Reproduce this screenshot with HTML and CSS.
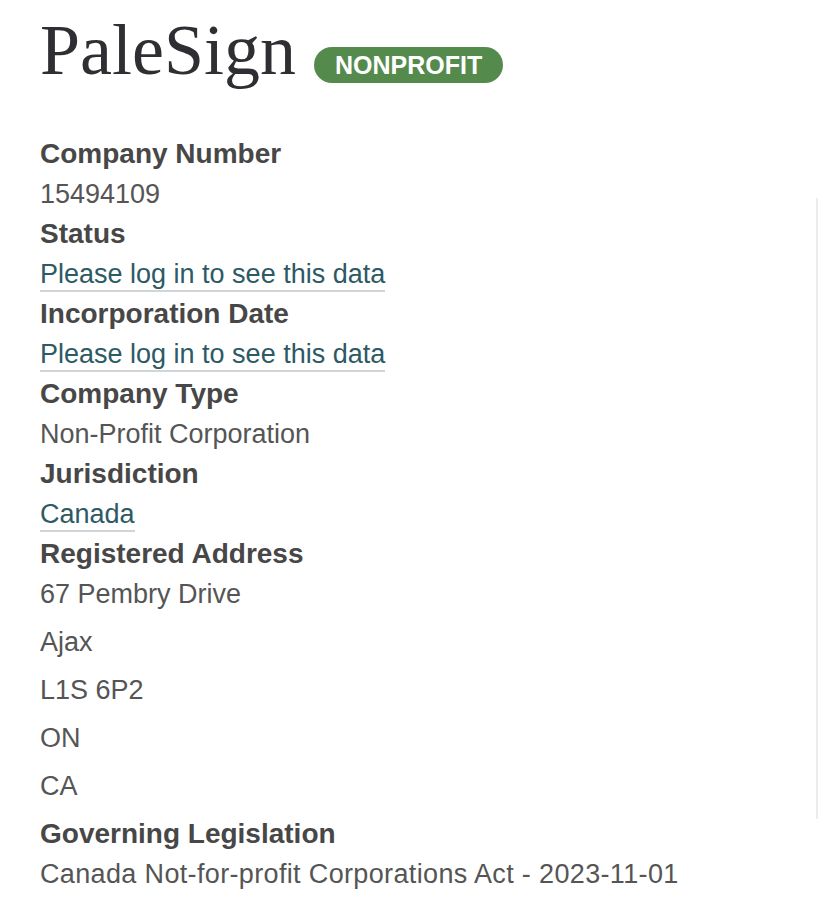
FILE: index.html
```html
<!DOCTYPE html>
<html lang="en">
<head>
<meta charset="utf-8">
<title>PaleSign</title>
<link rel="stylesheet" href="styles.css">
</head>
<body>
<div class="page">
  <main class="content">
    <h1 class="title">
      <span class="title-name">PaleSign</span>
      <span class="badge">NONPROFIT</span>
    </h1>
    <dl class="details">
      <dt>Company Number</dt>
      <dd>15494109</dd>
      <dt>Status</dt>
      <dd><a class="link" href="#">Please log in to see this data</a></dd>
      <dt>Incorporation Date</dt>
      <dd><a class="link" href="#">Please log in to see this data</a></dd>
      <dt>Company Type</dt>
      <dd>Non-Profit Corporation</dd>
      <dt>Jurisdiction</dt>
      <dd><a class="link" href="#">Canada</a></dd>
      <dt>Registered Address</dt>
      <dd class="address">
        <p>67 Pembry Drive</p>
        <p>Ajax</p>
        <p>L1S 6P2</p>
        <p>ON</p>
        <p>CA</p>
      </dd>
      <dt>Governing Legislation</dt>
      <dd class="wide">Canada Not-for-profit Corporations Act - 2023-11-01</dd>
    </dl>
  </main>
  <div class="edge"></div>
</div>
</body>
</html>
```

FILE: styles.css
```css
html, body {
  margin: 0;
  padding: 0;
  background: #ffffff;
}

.page {
  display: flex;
  align-items: flex-start;
  width: 818px;
  min-height: 904px;
}

.content {
  flex: 1;
  padding: 10px 0 0 40px;
  font-family: "Liberation Sans", Arial, sans-serif;
}

.edge {
  width: 2px;
  height: 621px;
  margin-top: 198px;
  background: #ececec;
}

.title {
  display: flex;
  align-items: baseline;
  margin: 0;
  font-weight: normal;
}

.title-name {
  font-family: "Liberation Serif", "Times New Roman", serif;
  font-size: 72px;
  line-height: 80px;
  color: #2f2f33;
}

.badge {
  margin-left: 18px;
  padding: 5px 21px 4px;
  border-radius: 18px;
  background: #558a4d;
  color: #ffffff;
  font-family: "Liberation Sans", Arial, sans-serif;
  font-weight: bold;
  font-size: 25px;
  line-height: 27px;
}

.details {
  margin: 44px 0 0;
  padding: 0;
}

.details dt {
  font-weight: bold;
  font-size: 28px;
  line-height: 40px;
  color: #474747;
}

.details dd {
  margin: 0;
  font-size: 27px;
  line-height: 40px;
  color: #555555;
}

.details dd.wide {
  letter-spacing: 0.35px;
}

.address p {
  margin: 0 0 8px;
}

.link {
  color: #2d5a64;
  text-decoration: none;
  padding-bottom: 1px;
  border-bottom: 2px solid #d2d5d8;
}
```
